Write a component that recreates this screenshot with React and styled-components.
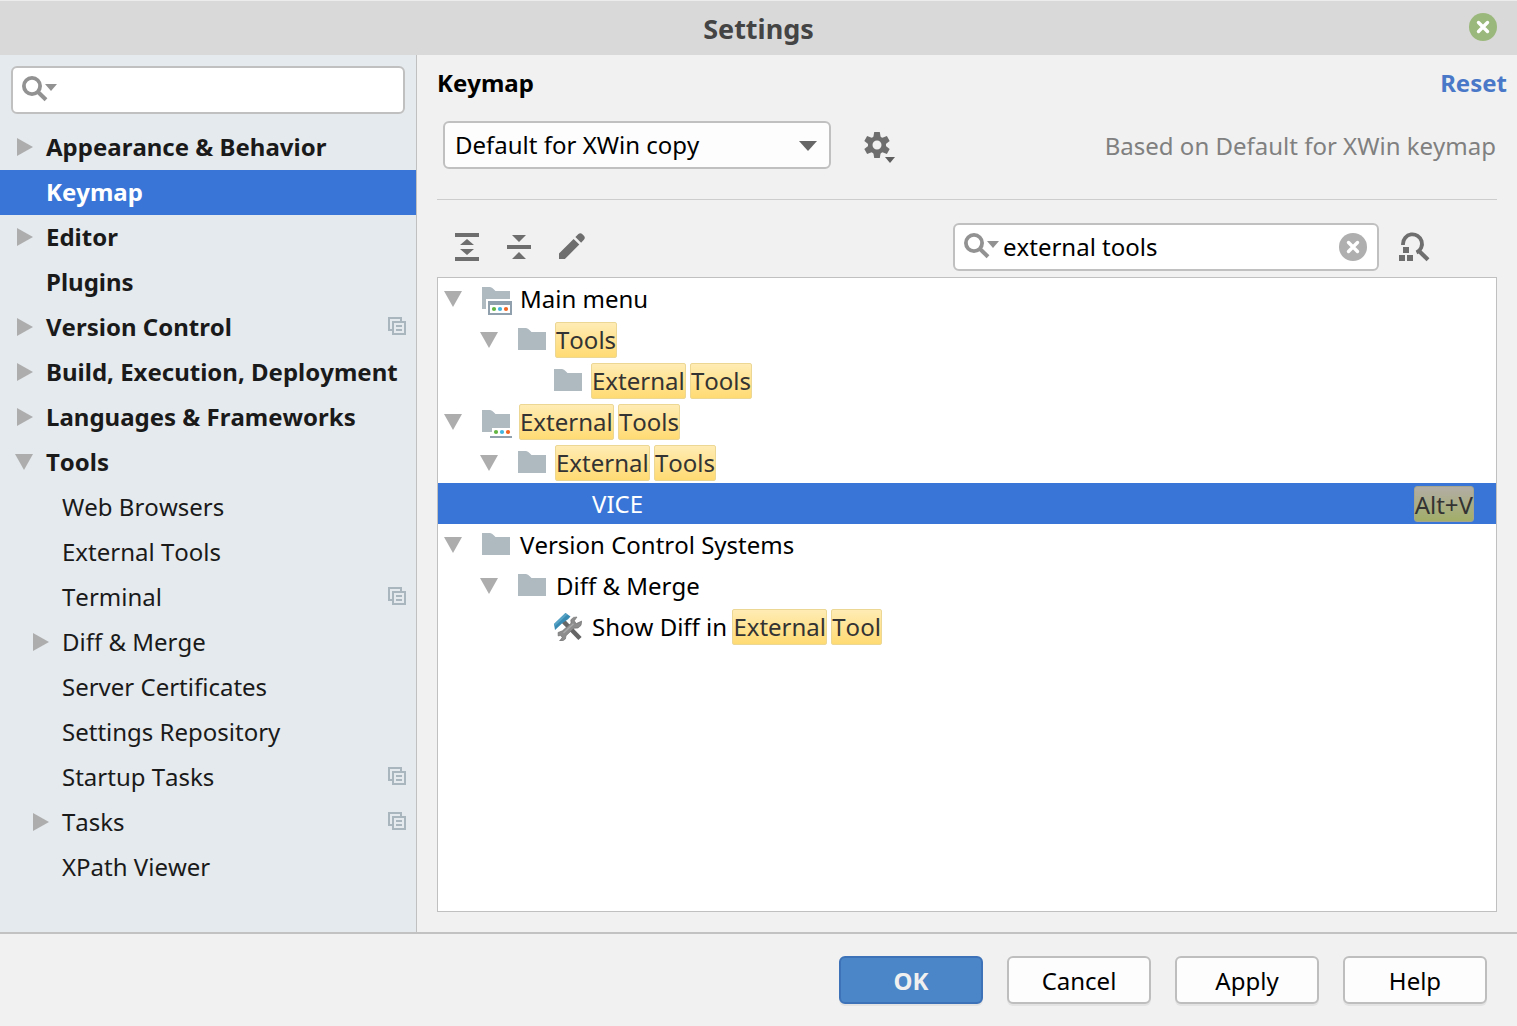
import React, { useState } from "react";
import styled, { createGlobalStyle, css } from "styled-components";

const GlobalStyle = createGlobalStyle`
  *, *::before, *::after { box-sizing: border-box; }
  body { margin: 0; background: #f1f1f1; }
  body, button, input, select {
    font: 24px/32px "Noto Sans", sans-serif;
    font-kerning: none;
    color: #000;
  }
  svg { display: block; flex: none; }
  ul { list-style: none; margin: 0; padding: 0; }
  h1, h2, p { margin: 0; }
`;

/* ---------- Window frame ---------- */

const Window = styled.div`
  display: flex;
  flex-direction: column;
  min-height: 100vh;
`;

const TitleBar = styled.header`
  display: grid;
  grid-template-columns: 1fr auto 1fr;
  align-items: center;
  height: 55px;
  padding: 0 20px;
  background: #d9d9d9;
  border-top: 1px solid #ececec;
`;

const Title = styled.h1`
  grid-column: 2;
  padding-top: 2px;
  font-size: 27px;
  line-height: 36px;
  font-weight: 700;
  color: #444;
`;

const PlainButton = styled.button`
  display: flex;
  align-items: center;
  justify-content: center;
  padding: 0;
  border: 0;
  background: none;
  cursor: pointer;
`;

const CloseButton = styled(PlainButton)`
  justify-self: end;
  padding-bottom: 2px;
`;

const Body = styled.div`
  display: flex;
  flex: 1;
`;

const Footer = styled.footer`
  display: flex;
  justify-content: flex-end;
  gap: 24px;
  padding: 22px 30px;
  border-top: 2px solid #c2c2c2;
`;

const FooterButton = styled.button`
  width: 144px;
  height: 48px;
  padding: 2px 0 0;
  border-radius: 6px;
  cursor: pointer;
  box-shadow: 0 2px 0 #e3e3e3;
  ${(p) =>
    p.$primary
      ? css`
          font-weight: 700;
          color: #f0f0f0;
          background: #4a86c8;
          border: 2px solid #3d72b8;
        `
      : css`
          background: #fdfdfd;
          border: 2px solid #bebebe;
        `}
`;

/* ---------- Fields ---------- */

const SearchField = styled.div`
  display: flex;
  align-items: center;
  gap: 2px;
  height: 48px;
  padding: 0 10px 0 9px;
  background: #fff;
  border: 2px solid #c0c0c0;
  border-radius: 6px;
`;

const SearchInput = styled.input`
  flex: 1;
  min-width: 0;
  height: 40px;
  padding: 0 0 2px;
  border: 0;
  outline: 0;
  background: none;
`;

const SelectBox = styled.div`
  display: grid;
  align-items: center;
  width: 388px;

  & > * { grid-area: 1 / 1; }
  & > svg { justify-self: end; margin-right: 14px; pointer-events: none; }
`;

const Select = styled.select`
  appearance: none;
  width: 100%;
  height: 48px;
  padding: 0 40px 0 10px;
  border: 2px solid #c0c0c0;
  border-radius: 6px;
  background: #fdfdfd;
  outline: 0;
`;

/* ---------- Sidebar ---------- */

const Sidebar = styled.nav`
  width: 417px;
  flex: none;
  background: #e5eaee;
  border-right: 1px solid #c0c0c0;
`;

const SidebarSearch = styled.div`
  padding: 11px;
`;

const NavRow = styled.a`
  display: flex;
  align-items: center;
  height: 45px;
  padding: 0 10px 0 ${(p) => (p.$nested ? 31 : 15)}px;
  color: ${(p) => (p.$selected ? "#fff" : "#1a1a1a")};
  background: ${(p) => (p.$selected ? "#3875d7" : "none")};
  font-weight: ${(p) => (p.$nested ? 400 : 700)};
  text-decoration: none;
  white-space: nowrap;
`;

const NavArrow = styled.span`
  width: 31px;
  flex: none;
  padding-bottom: 2px;
`;

const NavLabel = styled.span`
  flex: 1;
  padding-bottom: 2px;
`;

/* ---------- Keymap page ---------- */

const Page = styled.main`
  display: flex;
  flex-direction: column;
  flex: 1;
  min-width: 0;
  padding: 12px 20px 20px;
`;

const PageHeader = styled.div`
  display: flex;
  justify-content: space-between;
  margin-right: -10px;
  margin-bottom: 22px;
`;

const PageTitle = styled.h2`
  font-size: 24px;
  font-weight: 700;
`;

const ResetLink = styled.a`
  font-weight: 700;
  color: #4a78c8;
  text-decoration: none;
`;

const SchemeRow = styled.div`
  display: flex;
  align-items: center;
  gap: 33px;
  padding: 0 1px 30px 6px;
  border-bottom: 1px solid #cdcdcd;
`;

const SchemeNote = styled.p`
  margin-left: auto;
  padding-top: 2px;
  color: #808080;
`;

const Toolbar = styled.div`
  display: flex;
  align-items: center;
  gap: 20px;
  padding: 23px 66px 6px 14px;
`;

const ToolbarSearch = styled(SearchField)`
  width: 426px;
  margin-left: auto;
`;

const ToolButton = styled(PlainButton)`
  width: 32px;
  height: 32px;
`;

const ActionTree = styled.ul`
  flex: 1;
  background: #fff;
  border: 1px solid #c0c0c0;
`;

const ActionRow = styled.li`
  display: flex;
  align-items: center;
  height: 41px;
  padding: 0 22px 0 ${(p) => 6 + p.$depth * 36}px;
  color: ${(p) => (p.$selected ? "#fff" : "#000")};
  background: ${(p) => (p.$selected ? "#3875d7" : "none")};
  white-space: pre;
`;

const ActionArrow = styled.span`
  width: 38px;
  flex: none;
`;

const ActionIcon = styled.span`
  width: 38px;
  flex: none;
`;

const ActionLabel = styled.span`
  flex: 1;
`;

const Highlight = styled.mark`
  display: inline-block;
  height: 36px;
  margin: 0 -1px;
  border: 1px solid #ecd795;
  border-radius: 2px;
  line-height: 34px;
  color: #333;
  background: linear-gradient(#ffecb4, #ffdb73);
`;

const Shortcut = styled.kbd`
  height: 36px;
  border: 1px solid #a5a58d;
  border-radius: 3px;
  font-family: inherit;
  line-height: 36px;
  color: #333;
  background: linear-gradient(#b3ada5, #a2ae68);
`;

/* ---------- Icons ---------- */

const RoundCross = ({ fill }) => (
  <svg width="28" height="28" viewBox="0 0 28 28">
    <circle cx="14" cy="14" r="14" fill={fill} />
    <path d="M9.5 9.5 18.5 18.5M18.5 9.5 9.5 18.5" stroke="#fff" strokeWidth="3.4" strokeLinecap="round" />
  </svg>
);

const SearchIcon = () => (
  <svg width="37" height="28" viewBox="0 0 37 28">
    <circle cx="10" cy="10" r="8.1" fill="none" stroke="#929292" strokeWidth="3.8" />
    <path d="M15.5 15.5 24 23.8" stroke="#929292" strokeWidth="4" />
    <path d="M23 8H35L29 15Z" fill="#929292" />
  </svg>
);

const ArrowRight = () => (
  <svg width="18" height="18" viewBox="0 0 18 18">
    <path d="M2 0 18 9 2 18Z" fill="#adadad" />
  </svg>
);

const ArrowDown = () => (
  <svg width="18" height="16" viewBox="0 0 18 16">
    <path d="M0 0H18L9 16Z" fill="#adadad" />
  </svg>
);

const ComboArrow = () => (
  <svg width="18" height="12" viewBox="0 0 18 12">
    <path d="M0 2H18L9 12Z" fill="#666" />
  </svg>
);

const ProjectIcon = () => (
  <svg width="18" height="21" viewBox="0 0 18 21" fill="none" stroke="#a9b6be" strokeWidth="2">
    <path d="M4 13H1V1H13V4M5 5H17V17H5ZM8 9H14M8 13H14" />
  </svg>
);

const GearIcon = () => (
  <svg width="32" height="38" viewBox="0 0 32 38">
    <g transform="translate(13 19)" fill="#6e6e6e">
      <circle r="6.8" fill="none" stroke="#6e6e6e" strokeWidth="4.6" />
      {[0, 60, 120, 180, 240, 300].map((angle) => (
        <path key={angle} d="M-2.8-13H2.8L3.8-7H-3.8Z" transform={`rotate(${angle})`} />
      ))}
    </g>
    <path d="M21 31H31L26 37Z" fill="#5e5e5e" />
  </svg>
);

const ExpandIcon = () => (
  <svg width="24" height="28" viewBox="0 0 24 28" fill="#6e6e6e">
    <path d="M0 0H24V4H0ZM0 24H24V28H0ZM12 6 19 12H5ZM5 16H19L12 22Z" />
  </svg>
);

const CollapseIcon = () => (
  <svg width="24" height="24" viewBox="0 0 24 24" fill="#6e6e6e">
    <path d="M0 10H24V14H0ZM5 0H19L12 7ZM12 17 19 24H5Z" />
  </svg>
);

const PencilIcon = () => (
  <svg width="28" height="28" viewBox="0 0 28 28" fill="#6e6e6e">
    <path d="M2 20.5 16.6 5.9 22.3 11.6 7.9 26H2ZM18.4 4.1 21.4 1.1Q23.4-.7 25.4 1.2L26.9 2.8Q28.7 4.8 26.9 6.8L24.1 9.8Z" />
  </svg>
);

const FindShortcutIcon = () => (
  <svg width="32" height="32" viewBox="0 0 32 32">
    <path d="M4 14V13A9.5 9.5 0 1 1 17.5 21.5" fill="none" stroke="#6e6e6e" strokeWidth="3.8" />
    <path d="M19.5 19.5 29 28.7" stroke="#6e6e6e" strokeWidth="4.2" />
    <path d="M4 16h6v6h-6zM0 24h6v6h-6zM8 24h6v6h-6z" fill="#6e6e6e" />
  </svg>
);

const folderShape = "M0 4H8Q10 4 12 6.5L13.5 8H28V26H0Z";

const Dots = ({ x }) => (
  <>
    <circle cx={x} cy="26" r="2.1" fill="#62b543" />
    <circle cx={x + 6} cy="26" r="2.1" fill="#40b6e0" />
    <circle cx={x + 12} cy="26" r="2.1" fill="#f26522" />
  </>
);

const FolderIcon = ({ variant }) => (
  <svg width="30" height="32" viewBox="0 0 30 32">
    <path d={folderShape} fill="#aeb9c0" />
    {variant === "menu" && (
      <>
        <path d="M4 16H30V32H4Z" fill="#fff" />
        <path d="M6 18H30V32H6Z" fill="#90a0ad" />
        <path d="M8 22H28V30H8Z" fill="#fff" />
        <Dots x={12} />
      </>
    )}
    {variant === "tools" && (
      <>
        <path d="M10 22H30V30H10Z" fill="#fff" />
        <path d="M8 30H30V32H8Z" fill="#90a0ad" />
        <Dots x={14} />
      </>
    )}
  </svg>
);

const HammerWrenchIcon = () => (
  <svg width="28" height="28" viewBox="0 0 28 28">
    <path d="M9 8 26 25.5" stroke="#666" strokeWidth="4.6" />
    <path d="M0 11 11.5 0 16.5 3.6 14 6.2 11.5 8 8.5 10 1 17Z" fill="#3a8bb3" />
    <path d="M0 11 11.5 0 13.5 1.4 1 13Z" fill="#56a3c6" />
    <path
      d="M4 19.5 8.4 17.8 17 10.2 16.8 6.8 19.5 4.4 23 4 20.3 7.8 22.2 10.6 27.8 8 27 12.4 24 15 20 15.2 12 22.8 11.4 26 8.5 28H5.5L8.2 24.6 6.6 22.4 4.2 23Z"
      fill="#8d8d8d"
      stroke="#6c6c6c"
      strokeWidth=".6"
    />
    <path d="M9.5 20 19.5 10.8" stroke="#a9a9a9" strokeWidth="1.4" />
  </svg>
);

/* ---------- Data ---------- */

const sections = [
  { label: "Appearance & Behavior", arrow: "right" },
  { label: "Keymap", selected: true },
  { label: "Editor", arrow: "right" },
  { label: "Plugins" },
  { label: "Version Control", arrow: "right", project: true },
  { label: "Build, Execution, Deployment", arrow: "right" },
  { label: "Languages & Frameworks", arrow: "right" },
  { label: "Tools", arrow: "down" },
  { label: "Web Browsers", nested: true },
  { label: "External Tools", nested: true },
  { label: "Terminal", nested: true, project: true },
  { label: "Diff & Merge", nested: true, arrow: "right" },
  { label: "Server Certificates", nested: true },
  { label: "Settings Repository", nested: true },
  { label: "Startup Tasks", nested: true, project: true },
  { label: "Tasks", nested: true, arrow: "right", project: true },
  { label: "XPath Viewer", nested: true },
];

// Words wrapped in brackets are search hits.
const actions = [
  { depth: 0, open: true, icon: <FolderIcon variant="menu" />, text: "Main menu" },
  { depth: 1, open: true, icon: <FolderIcon />, text: "[Tools]" },
  { depth: 2, icon: <FolderIcon />, text: "[External] [Tools]" },
  { depth: 0, open: true, icon: <FolderIcon variant="tools" />, text: "[External] [Tools]" },
  { depth: 1, open: true, icon: <FolderIcon />, text: "[External] [Tools]" },
  { depth: 2, text: "VICE", shortcut: "Alt+V", selected: true },
  { depth: 0, open: true, icon: <FolderIcon />, text: "Version Control Systems" },
  { depth: 1, open: true, icon: <FolderIcon />, text: "Diff & Merge" },
  { depth: 2, icon: <HammerWrenchIcon />, text: "Show Diff in [External] [Tool]" },
];

const renderHits = (text) =>
  text
    .split(/(\[[^\]]+\])/)
    .filter(Boolean)
    .map((part, i) => (part[0] === "[" ? <Highlight key={i}>{part.slice(1, -1)}</Highlight> : part));

export default function App() {
  const [query, setQuery] = useState("external tools");

  return (
    <Window>
      <GlobalStyle />
      <TitleBar>
        <Title>Settings</Title>
        <CloseButton type="button" aria-label="Close">
          <RoundCross fill="#9bb87c" />
        </CloseButton>
      </TitleBar>

      <Body>
        <Sidebar aria-label="Settings sections">
          <SidebarSearch>
            <SearchField>
              <SearchIcon />
              <SearchInput type="text" aria-label="Search settings" />
            </SearchField>
          </SidebarSearch>
          <ul>
            {sections.map((s) => (
              <li key={s.label}>
                <NavRow href="#" $nested={s.nested} $selected={s.selected} aria-current={s.selected ? "page" : undefined}>
                  <NavArrow>
                    {s.arrow === "right" && <ArrowRight />}
                    {s.arrow === "down" && <ArrowDown />}
                  </NavArrow>
                  <NavLabel>{s.label}</NavLabel>
                  {s.project && <ProjectIcon />}
                </NavRow>
              </li>
            ))}
          </ul>
        </Sidebar>

        <Page>
          <PageHeader>
            <PageTitle>Keymap</PageTitle>
            <ResetLink href="#">Reset</ResetLink>
          </PageHeader>

          <SchemeRow>
            <SelectBox>
              <Select aria-label="Keymap scheme">
                <option>Default for XWin copy</option>
              </Select>
              <ComboArrow />
            </SelectBox>
            <ToolButton type="button" aria-label="Scheme actions">
              <GearIcon />
            </ToolButton>
            <SchemeNote>Based on Default for XWin keymap</SchemeNote>
          </SchemeRow>

          <Toolbar>
            <ToolButton type="button" aria-label="Expand all">
              <ExpandIcon />
            </ToolButton>
            <ToolButton type="button" aria-label="Collapse all">
              <CollapseIcon />
            </ToolButton>
            <ToolButton type="button" aria-label="Edit shortcut">
              <PencilIcon />
            </ToolButton>
            <ToolbarSearch>
              <SearchIcon />
              <SearchInput
                type="text"
                aria-label="Search actions"
                value={query}
                onChange={(e) => setQuery(e.target.value)}
              />
              <PlainButton type="button" aria-label="Clear search" onClick={() => setQuery("")}>
                <RoundCross fill="#afafaf" />
              </PlainButton>
            </ToolbarSearch>
            <ToolButton type="button" aria-label="Find actions by shortcut">
              <FindShortcutIcon />
            </ToolButton>
          </Toolbar>

          <ActionTree role="tree" aria-label="Actions">
            {actions.map((a, i) => (
              <ActionRow
                key={i}
                role="treeitem"
                aria-level={a.depth + 1}
                aria-expanded={a.open}
                aria-selected={!!a.selected}
                $depth={a.depth}
                $selected={a.selected}
              >
                <ActionArrow>{a.open && <ArrowDown />}</ActionArrow>
                <ActionIcon>{a.icon}</ActionIcon>
                <ActionLabel>{renderHits(a.text)}</ActionLabel>
                {a.shortcut && <Shortcut>{a.shortcut}</Shortcut>}
              </ActionRow>
            ))}
          </ActionTree>
        </Page>
      </Body>

      <Footer>
        <FooterButton type="button" $primary>OK</FooterButton>
        <FooterButton type="button">Cancel</FooterButton>
        <FooterButton type="button">Apply</FooterButton>
        <FooterButton type="button">Help</FooterButton>
      </Footer>
    </Window>
  );
}
